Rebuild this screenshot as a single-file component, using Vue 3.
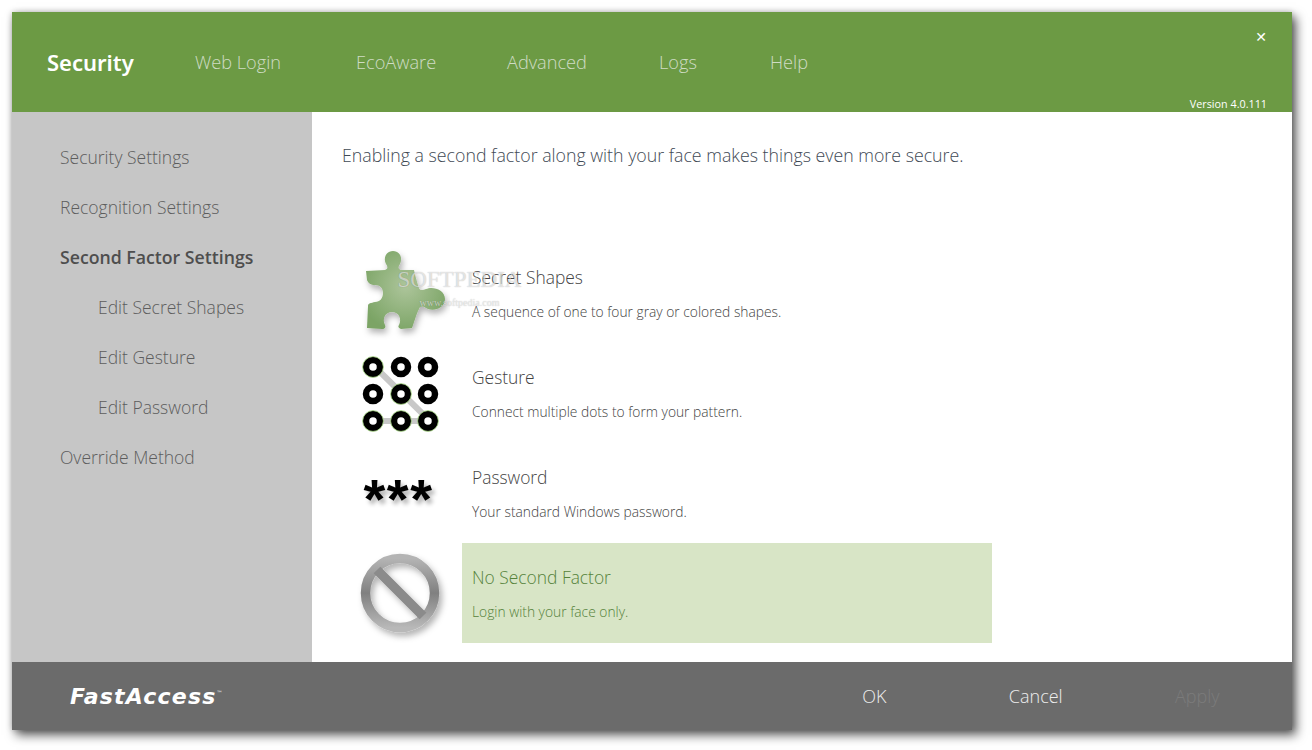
<template>
  <div class="page">
    <div class="window">
      <header class="top">
        <nav class="tabs">
          <span v-for="t in tabs" :key="t.name" class="tab" :class="{ active: t.active }" :style="{ width: t.w + 'px' }">{{ t.name }}</span>
        </nav>
        <span class="close">✕</span>
        <span class="version">Version 4.0.111</span>
      </header>

      <div class="middle">
        <aside class="side">
          <a v-for="s in sideItems" :key="s.name" class="side-item" :class="{ sub: s.sub, current: s.current }">{{ s.name }}</a>
        </aside>

        <main class="content">
          <p class="lead">Enabling a second factor along with your face makes things even more secure.</p>

          <div class="options">
            <!-- Secret Shapes -->
            <div class="option">
              <div class="icon">
                <svg width="100" height="100" viewBox="0 0 100 100">
                  <defs>
                    <radialGradient id="puzzleFill" cx="0.5" cy="0.45" r="0.6">
                      <stop offset="0" stop-color="#adc59b" />
                      <stop offset="1" stop-color="#7ba465" />
                    </radialGradient>
                    <filter id="softShadow" x="-20%" y="-20%" width="150%" height="150%">
                      <feDropShadow dx="2" dy="4" stdDeviation="3" flood-color="#000" flood-opacity="0.3" />
                    </filter>
                  </defs>
                  <path
                    d="M16 28 L35 27 C38 26 38 24 36 21 C33 15 36 8 43 8 C50 8 53 15 50 21 C48 24 48 26 51 27 L64 27 C66 36 68 42 69 45 C70 48 73 47 76 46 C82 43 95 46 95 56 C95 66 82 69 76 65 C73 63 70 63 69 66 C66 72 64 80 62 85 L51 86 C48 85 48 83 49 82 C52 76 49 69 42 69 C35 69 32 76 35 82 C36 84 35 86 32 86 L17 85 L18 63 C18 60 21 60 25 59 C30 59 33 55 33 50 C33 45 30 42 25 42 C21 42 18 40 17 37 Z"
                    fill="url(#puzzleFill)"
                    filter="url(#softShadow)"
                  />
                </svg>
              </div>
              <div class="texts">
                <div class="name">Secret Shapes</div>
                <div class="desc">A sequence of one to four gray or colored shapes.</div>
              </div>
            </div>

            <!-- Gesture -->
            <div class="option">
              <div class="icon">
                <svg width="100" height="100" viewBox="0 0 100 100">
                  <path d="M25 24 L80 78 M25 78 L80 78" stroke="#c8c8c8" stroke-width="6" fill="none" />
                  <circle v-for="d in dots" :key="d.x + '-' + d.y" :cx="d.x" :cy="d.y" r="7" fill="#fff" stroke="#000" stroke-width="6.5" />
                  <circle v-for="d in dots.filter(p => p.on)" :key="'on' + d.x + d.y" :cx="d.x" :cy="d.y" r="10.4" fill="none" stroke="#9ed07a" stroke-width="0.8" />
                </svg>
              </div>
              <div class="texts">
                <div class="name">Gesture</div>
                <div class="desc">Connect multiple dots to form your pattern.</div>
              </div>
            </div>

            <!-- Password -->
            <div class="option">
              <div class="icon"><span class="stars">***</span></div>
              <div class="texts">
                <div class="name">Password</div>
                <div class="desc">Your standard Windows password.</div>
              </div>
            </div>

            <!-- None -->
            <div class="option selected">
              <div class="icon">
                <svg width="100" height="100" viewBox="0 0 100 100">
                  <defs>
                    <linearGradient id="ringFill" x1="0" y1="0" x2="0" y2="1">
                      <stop offset="0" stop-color="#b4b4b4" />
                      <stop offset="0.5" stop-color="#808080" />
                      <stop offset="1" stop-color="#b8b8b8" />
                    </linearGradient>
                    <filter id="ringShadow" x="-20%" y="-20%" width="150%" height="150%">
                      <feDropShadow dx="3" dy="4" stdDeviation="3" flood-color="#000" flood-opacity="0.3" />
                    </filter>
                  </defs>
                  <g filter="url(#ringShadow)">
                    <circle cx="50" cy="50" r="34.5" fill="none" stroke="url(#ringFill)" stroke-width="9.5" />
                    <path d="M27 27 L73 73" stroke="#8b8b8b" stroke-width="9.5" />
                  </g>
                </svg>
              </div>
              <div class="texts">
                <div class="name">No Second Factor</div>
                <div class="desc">Login with your face only.</div>
              </div>
            </div>
          </div>

          <div class="mark">
            <div class="mark-big">SOFTPEDIA</div>
            <div class="mark-small">www.softpedia.com</div>
          </div>
        </main>
      </div>

      <footer class="bottom">
        <span class="logo">FastAccess<sup>™</sup></span>
        <div class="actions">
          <span class="btn">OK</span>
          <span class="btn">Cancel</span>
          <span class="btn off">Apply</span>
        </div>
      </footer>
    </div>
  </div>
</template>

<script setup>
const tabs = [
  { name: 'Security', active: true, w: 148 },
  { name: 'Web Login', w: 161 },
  { name: 'EcoAware', w: 151 },
  { name: 'Advanced', w: 152 },
  { name: 'Logs', w: 111 },
  { name: 'Help', w: 60 },
]

const sideItems = [
  { name: 'Security Settings' },
  { name: 'Recognition Settings' },
  { name: 'Second Factor Settings', current: true },
  { name: 'Edit Secret Shapes', sub: true },
  { name: 'Edit Gesture', sub: true },
  { name: 'Edit Password', sub: true },
  { name: 'Override Method' },
]

// 3x3 grid of the pattern lock; "on" dots are part of the drawn pattern
const dots = [
  { x: 23, y: 24, on: true }, { x: 51, y: 24 }, { x: 78, y: 24 },
  { x: 23, y: 51 }, { x: 51, y: 51, on: true }, { x: 78, y: 51 },
  { x: 23, y: 78, on: true }, { x: 51, y: 78, on: true }, { x: 78, y: 78, on: true },
]
</script>

<style>
html, body {
  background: #fff;
  overflow: hidden;
}
</style>

<style scoped>
.page {
  width: 1312px;
  height: 750px;
  padding: 12px 20px 20px 12px;
  box-sizing: border-box;
  font-family: "Open Sans", "Noto Sans", sans-serif;
}

.window {
  width: 1280px;
  height: 718px;
  display: flex;
  flex-direction: column;
  box-shadow: 4px 5px 10px rgba(0, 0, 0, 0.65), 0 0 6px rgba(0, 0, 0, 0.2);
  background: #fff;
}

.top {
  height: 100px;
  flex: none;
  background: #6c9a44;
  position: relative;
  padding-left: 35px;
  display: flex;
  align-items: center;
}

.tabs {
  display: flex;
  align-items: center;
  margin-top: -1px;
}

.tab {
  font-size: 18.2px;
  font-weight: 300;
  color: #cfdcc4;
  white-space: nowrap;
}

.tab.active {
  font-size: 22px;
  font-weight: 600;
  color: #fff;
  font-family: "Noto Sans", "Open Sans", sans-serif;
}

.close {
  position: absolute;
  right: 25px;
  top: 16px;
  font-size: 14px;
  line-height: 18px;
  font-weight: 700;
  color: #fff;
  font-family: "DejaVu Sans", sans-serif;
}

.version {
  position: absolute;
  right: 25px;
  bottom: 1px;
  font-size: 10.8px;
  color: #fff;
}

.middle {
  flex: 1;
  display: flex;
  min-height: 0;
}

.side {
  width: 300px;
  flex: none;
  background: #c6c6c6;
  padding-top: 20px;
  box-sizing: border-box;
}

.side-item {
  display: block;
  height: 50px;
  line-height: 50px;
  padding-left: 48px;
  font-size: 17.5px;
  font-weight: 300;
  color: #5d5d5d;
}

.side-item.sub {
  padding-left: 86px;
}

.side-item.current {
  font-weight: 600;
  color: #4e4e4e;
  font-size: 17.7px;
}

.content {
  flex: 1;
  position: relative;
  padding: 0;
}

.lead {
  margin: 0;
  padding: 30px 0 0 30px;
  height: 131px;
  box-sizing: border-box;
  font-size: 17.75px;
  line-height: 26px;
  font-weight: 300;
  color: #3f4a55;
}

.options {
  display: flex;
  flex-direction: column;
}

.option {
  display: flex;
  height: 100px;
  width: 680px;
}

.icon {
  width: 150px;
  flex: none;
  position: relative;
  display: flex;
  align-items: center;
  justify-content: center;
  padding-left: 26px;
  box-sizing: border-box;
  background: #fff;
}

.texts {
  flex: 1;
  padding-left: 10px;
}

.selected .texts {
  background: #d8e5c6;
}

.selected .name {
  color: #55823a;
}

.selected .desc {
  color: #55823a;
}

.name {
  padding-top: 21px;
  height: 50px;
  box-sizing: border-box;
  font-size: 17.4px;
  line-height: 26px;
  font-weight: 300;
  color: #444;
}

.desc {
  padding-top: 9px;
  font-size: 13.8px;
  line-height: 20px;
  font-weight: 300;
  color: #444;
}

.stars {
  font-family: "Liberation Sans", sans-serif;
  font-weight: 700;
  font-size: 56px;
  line-height: 56px;
  height: 56px;
  letter-spacing: 1.5px;
  color: #000;
  text-shadow: 3px 4px 4px rgba(0, 0, 0, 0.3);
  margin-top: 12px;
  margin-left: -3px;
}

.mark {
  position: absolute;
  left: 85px;
  top: 156px;
  width: 125px;
  color: rgba(255, 255, 255, 0.6);
  pointer-events: none;
  font-family: "Liberation Serif", serif;
  text-align: center;
  text-shadow: 0 0 1px rgba(0, 0, 0, 0.3);
}

.mark-big {
  font-size: 23px;
  line-height: 24px;
  white-space: nowrap;
}

.mark-small {
  font-size: 10px;
  line-height: 12px;
  margin-top: 5px;
  white-space: nowrap;
}

.bottom {
  height: 68px;
  flex: none;
  background: #6b6b6b;
  display: flex;
  align-items: center;
  position: relative;
}

.logo {
  margin-left: 58px;
  font-family: "DejaVu Sans", sans-serif;
  font-style: italic;
  font-weight: 700;
  font-size: 22px;
  color: #fff;
  letter-spacing: 1.2px;
}

.logo sup {
  font-size: 6px;
  font-style: normal;
  vertical-align: 9px;
  line-height: 0;
  font-weight: 400;
}

.actions {
  margin-left: auto;
  display: flex;
  align-items: center;
  padding-right: 14px;
}

.btn {
  width: 161.5px;
  text-align: center;
  font-size: 18px;
  font-weight: 300;
  color: #eee;
}

.btn.off {
  color: #7b7b7b;
}
</style>
